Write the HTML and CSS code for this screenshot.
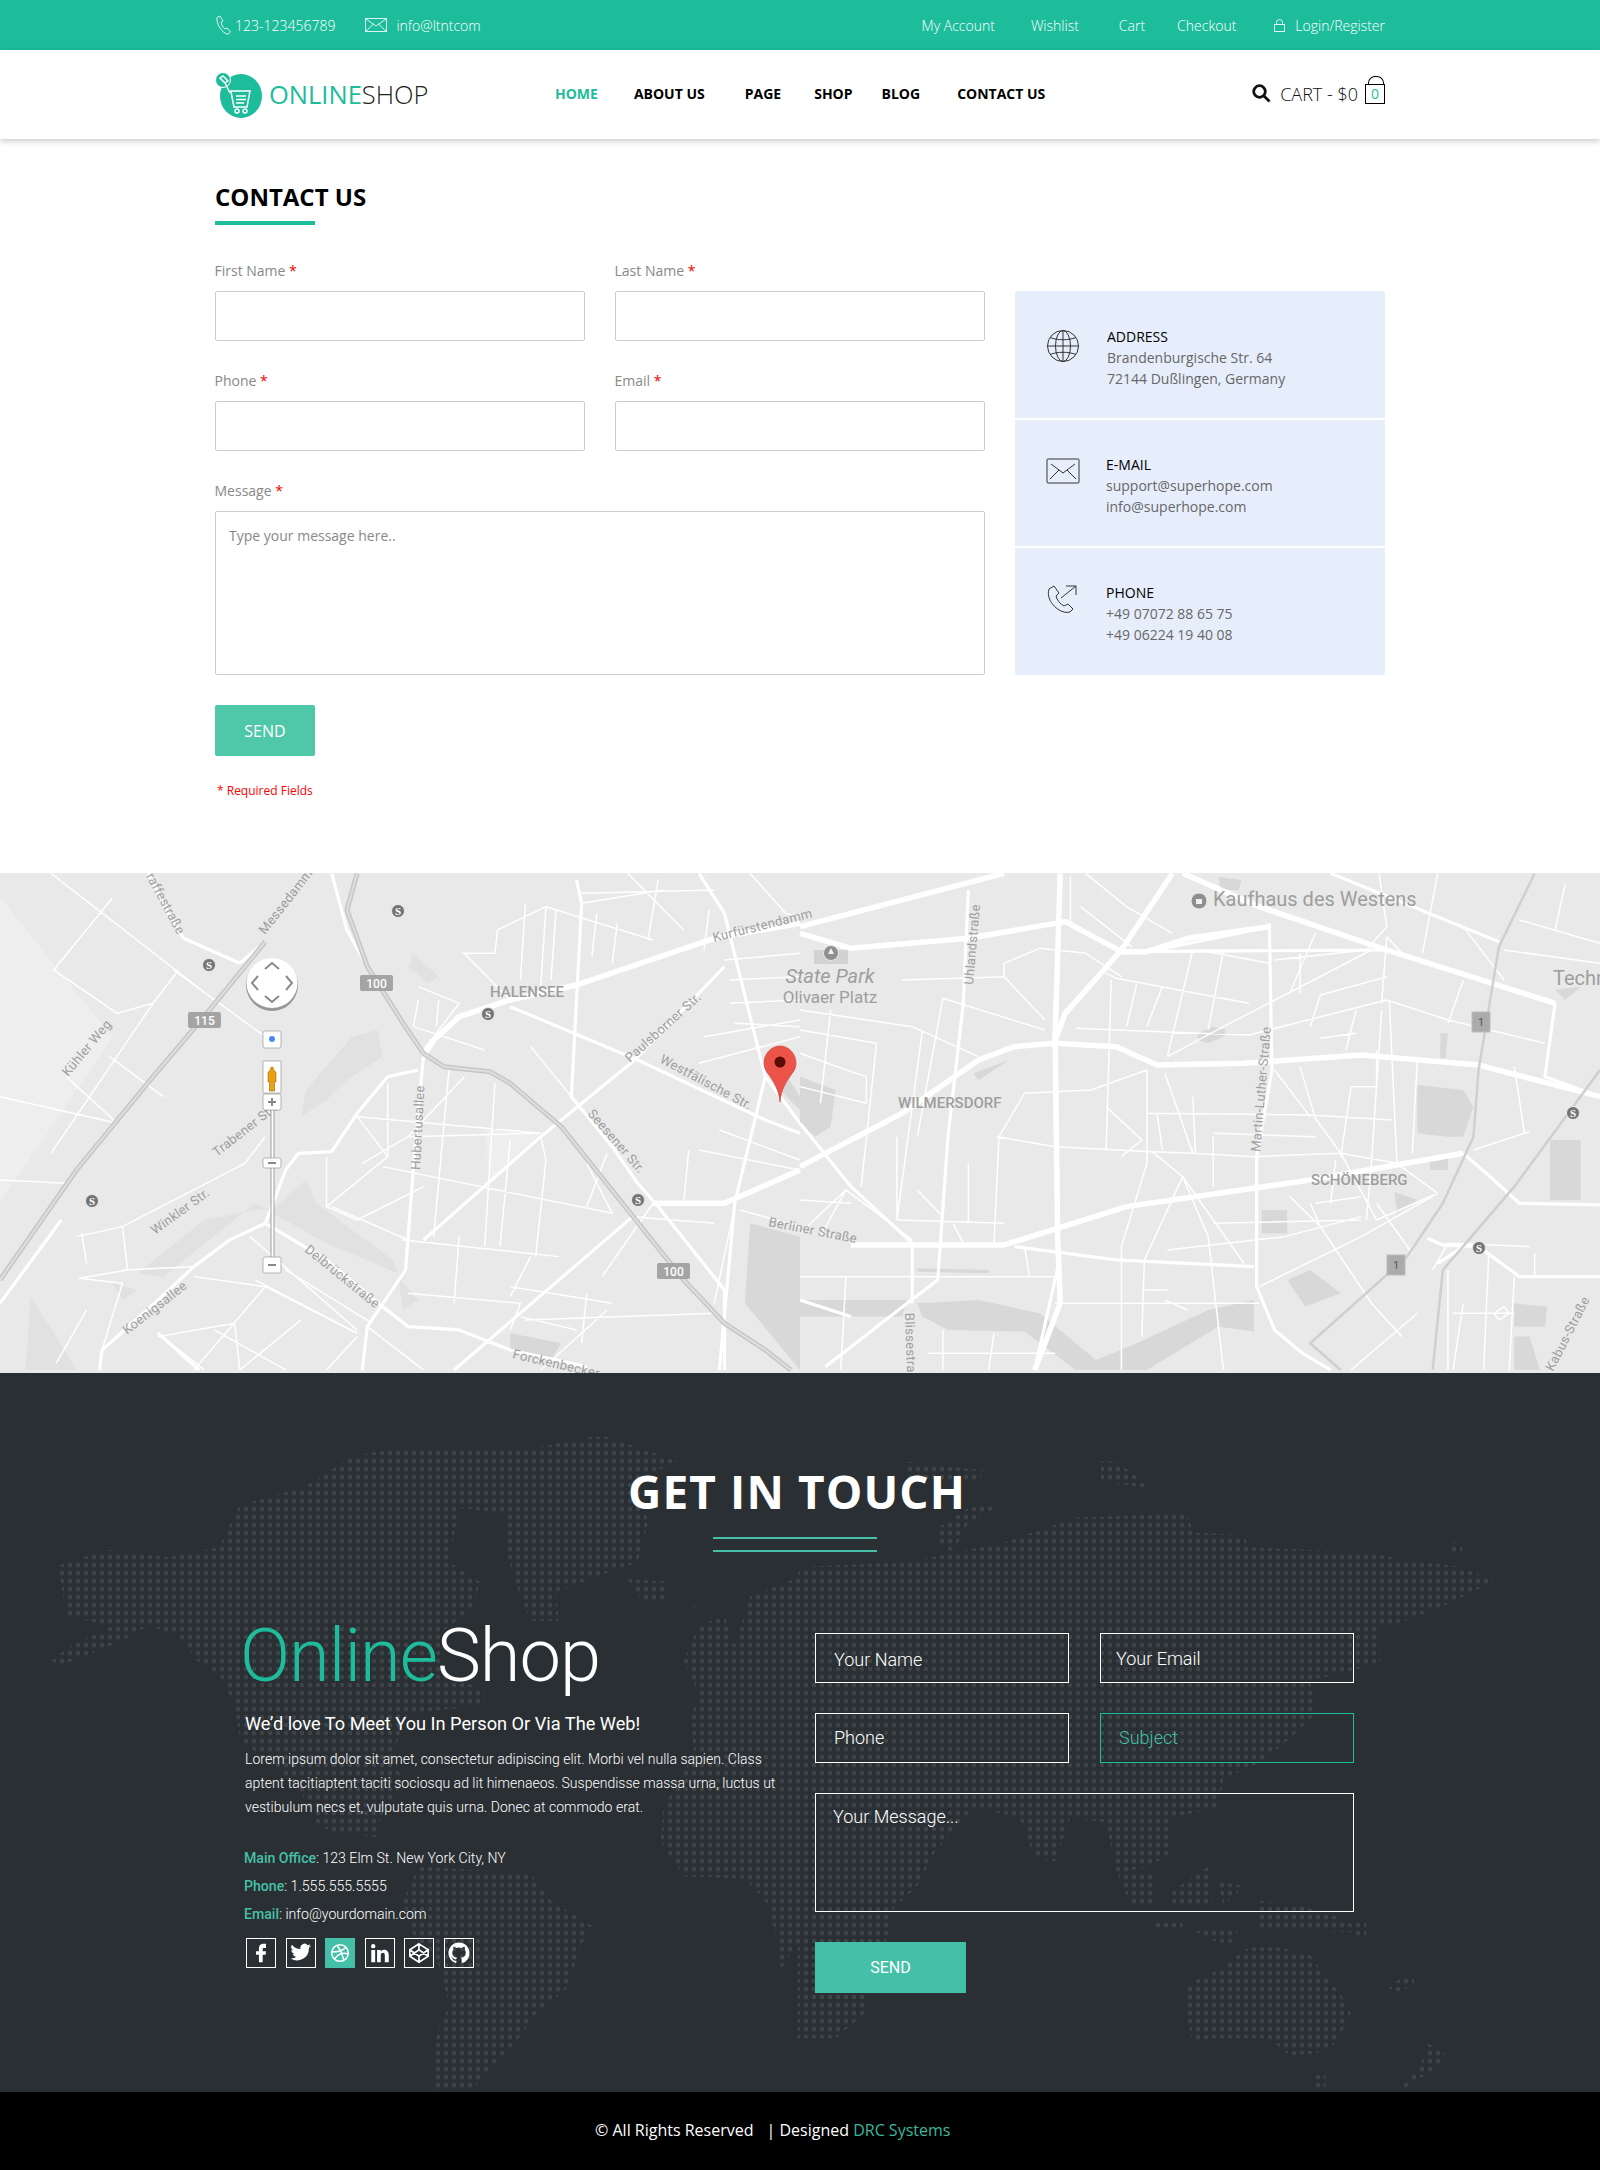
FILE: index.html
```html
<!DOCTYPE html>
<html lang="en">
<head>
<meta charset="utf-8">
<title>Contact Us - OnlineShop</title>
<link rel="stylesheet" href="styles.css">
</head>
<body>
<header class="topbar">
  <div class="wrap topbar-in">
    <div class="top-left">
      <svg class="ic-phone" width="18" height="20" viewBox="0 0 18 20"><path d="M2 2.500 5 1l3 5-2 1.500c.5 2.500 2 5 4 6.500l2-1 3.500 4-2.500 2.300C8 18.500 1 10 2 2.500z"/></svg>
      <span class="top-phone">123-123456789</span>
      <svg class="ic-mail" width="22" height="14" viewBox="0 0 22 14"><rect x=".5" y=".5" width="21" height="13"/><path d="M1 1l10 7 10-7M1 13l7.500-7M21 13l-7.500-7"/></svg>
      <span class="top-mail">info@ltntcom</span>
    </div>
    <nav class="top-right">
      <a>My Account</a><a>Wishlist</a><a>Cart</a><a>Checkout</a>
      <svg class="ic-lock" width="11" height="13" viewBox="0 0 11 13"><rect x=".5" y="5.500" width="10" height="7"/><path d="M2.500 5.500V3.500a3 3 0 0 1 6 0v2"/></svg>
      <a class="login">Login/Register</a>
    </nav>
  </div>
</header>

<div class="mainnav">
  <div class="wrap mainnav-in">
    <div class="logo">
      <svg width="50" height="46" viewBox="0 0 50 46">
        <ellipse class="lg-a" cx="27" cy="24" rx="21" ry="22"/>
        <circle class="lg-a lg-w" cx="9" cy="8" r="7.500"/>
        <path class="lg-b" d="M9 4l5 5-3 2-5-5zM11 11l5 10"/>
        <path class="lg-b" d="M16 19h20l-3 16H20L17 20"/>
        <path class="lg-b" d="M22 24h10M22 27.500h10M22 31h8"/>
        <circle class="lg-b" cx="23" cy="39" r="2"/><circle class="lg-b" cx="31" cy="39" r="2"/>
      </svg>
      <span class="logo-text"><b>ONLINE</b>SHOP</span>
    </div>
    <nav class="menu">
      <a class="active">HOME</a><a>ABOUT US</a><a>PAGE</a><a>SHOP</a><a>BLOG</a><a>CONTACT US</a>
    </nav>
    <div class="cart">
      <svg class="ic-search" width="19" height="19" viewBox="0 0 19 19"><circle cx="7.500" cy="7.500" r="5.800"/><path d="M11.800 11.800 17.500 17.500"/></svg>
      <span class="cart-text">CART - $0</span>
      <span class="bag"><span class="bag-n">0</span></span>
    </div>
  </div>
</div>

<main class="contact wrap">
  <h1 class="page-title">CONTACT US</h1>
  <div class="title-rule"></div>
  <div class="contact-row">
    <form class="cform">
      <label class="fld"><span class="lbl">First Name <i>*</i></span><input class="inp" type="text"></label>
      <label class="fld"><span class="lbl">Last Name <i>*</i></span><input class="inp" type="text"></label>
      <label class="fld"><span class="lbl">Phone <i>*</i></span><input class="inp" type="text"></label>
      <label class="fld"><span class="lbl">Email <i>*</i></span><input class="inp" type="text"></label>
      <label class="fld fld-wide"><span class="lbl">Message <i>*</i></span><textarea class="inp ta" placeholder="Type your message here.."></textarea></label>
      <div class="fld-wide">
        <button class="send" type="button">SEND</button>
        <p class="req">* Required Fields</p>
      </div>
    </form>
    <aside class="info">
      <section class="info-card">
        <svg class="info-ic" width="34" height="34" viewBox="0 0 34 34"><circle cx="17" cy="17" r="15.500"/><ellipse cx="17" cy="17" rx="7.500" ry="15.500"/><path d="M17 1.500v31M1.500 17h31M4 8.500c8 3 18 3 26 0M4 25.500c8-3 18-3 26 0"/></svg>
        <div class="info-txt"><h3>ADDRESS</h3><p>Brandenburgische Str. 64</p><p>72144 Dußlingen, Germany</p></div>
      </section>
      <section class="info-card">
        <svg class="info-ic" width="34" height="26" viewBox="0 0 34 26"><rect x="1" y="1" width="32" height="24" rx="1"/><path d="M5 6l12 9 12-9M4 21l9-9M30 21l-9-9"/></svg>
        <div class="info-txt"><h3>E-MAIL</h3><p>support@superhope.com</p><p>info@superhope.com</p></div>
      </section>
      <section class="info-card">
        <svg class="info-ic" width="34" height="30" viewBox="0 0 34 30"><path d="M3 5l5-3 5 7-3 3c1 4 4 8 8 10l4-2 5 5-3 3C14 31-1 17 3 5zM15 14 30 2M20 2h10v9"/></svg>
        <div class="info-txt"><h3>PHONE</h3><p>+49 07072 88 65 75</p><p>+49 06224 19 40 08</p></div>
      </section>
    </aside>
  </div>
</main>

<section class="map">
  <svg class="map-svg" width="1600" height="500" viewBox="0 873 1600 500">
    <rect x="0" y="873" width="1600" height="500" class="m-bg"/>
    <g class="m-soft" transform="translate(0,870) scale(.5102,.3333)">
      <path class="m-light" d="M0 80 220 500 0 1000zM950 780 1060 790 960 930z"/>
      <path class="m-block-l" d="M200 100 230 160 210 130zM690 500 740 480 750 560 680 630 640 690 590 740 600 660zM810 250 860 320 840 340 800 290zM540 1010 600 930 620 1000 770 1170 780 1210 640 1120 500 1000 320 1220 270 1210 400 1050zM60 1280 110 1400 150 1500 50 1500zM220 1240 270 1260 240 1290zM780 1220 820 1290 790 1320z"/>
      <path class="m-block" d="M1000 1390 1100 1420 1080 1470 1000 1440zM1470 1060 1568 1100 1568 1500 1460 1300zM1535 600 1568 680 1568 720 1535 670z"/>
      <path class="m-thin" d="M100 10 420 390M0 680 230 760M220 85 105 300 230 430 300 400 350 300M300 400 100 850M340 300 520 500M215 560 320 680M130 620 230 760M0 930 130 940M150 1100 240 1070 480 880 520 800M240 1070 250 1200 155 1225 240 1240 200 1440M160 1090 170 1180M240 1200 380 1190M380 1220 520 1250 700 1390M520 1250 380 1500M490 1100 700 1380M650 1010 800 1110M640 860 640 1010 700 1050 830 950M710 880 800 800 1050 790M700 740 760 860 640 1010M760 640 760 860M700 740 1060 790M880 600 850 1100M970 640 950 1130M1060 800 1070 870 1050 1160M790 1110 1095 1160M750 890 1200 1030 1150 880M910 620 800 800M910 250 1000 390M905 250 970 250 975 180 1070 110 1280 210M1030 100 1020 330M1070 110 1060 350M1170 130 1160 260M1210 160 1200 280M1040 530 1120 680M820 350 900 400 830 540M820 390 810 470 950 540M860 390 855 470M1140 100 1300 60M1140 70 1400 60M1470 10 1540 130 1568 140M1420 270 1568 250M1430 330 1568 320M1380 500 1568 450M1370 580 1568 500M1410 780 1568 870M1370 840 1568 900M1350 840 1340 1000M1280 1000 1180 1220M1450 1020 1568 1070M1440 1010 1400 1300M800 1270 1020 1300 1000 1380M1030 1350 1400 1330M1150 1270 1140 1420M1020 1340 1130 1380M720 1370 830 1500M700 1400 640 1500M310 1400 460 1360 470 1500M310 1390 400 1500M170 1320 110 1480M500 1230 700 1390M560 1200 730 1360M420 1380 560 1500M590 1350 470 1500M1000 1250 1200 1300M1060 1500 1190 1320M1090 120 1080 330M1040 1160 1000 1280M900 1100 890 1300M1190 850 1150 1010M1000 810 980 1130M1240 1040 1400 1060M1430 400 1568 390M1440 460 1568 470M1290 30 1270 210M1230 10 1340 180M1390 120 1380 240"/>
      <path class="m-mid" d="M650 10 680 180 720 290 780 440 820 530M470 280 360 205 330 130 290 10M120 1050 0 1300M820 600 760 620 700 730 650 845 585 850 560 900 520 1060 450 1110 380 1190 310 1290 200 1440 195 1500M520 1060 640 1170 750 1310 800 1370 900 1380 1000 1440 1150 1490M830 560 815 800 800 1100 795 1200 720 1370 710 1500M1000 410 1250 570 1500 750 1568 790M310 1390 390 1500M1130 30 1140 100 1120 680 1200 830 1250 940 1290 1010 1420 1260 1420 1500M1370 10 1420 130 1480 500 1500 620 1568 760M1500 620 1440 1000 1410 1500M890 1500 1240 1040M830 1110 1060 800 1240 575 1420 290M470 280 520 215"/>
      <path class="m-thick" d="M830 560 850 510 900 440 1000 390 1130 345 1400 205 1568 160M1280 1000 1420 1000 1568 900"/>
      <path class="m-hw" d="M700 10 680 120 720 290 790 460 830 550 870 590 960 605 1000 640 1100 770 1220 1000 1340 1230 1420 1360 1500 1440 1550 1500M520 215 400 440 300 620 150 900 0 1230"/>
      <path class="m-hwi" d="M700 10 680 120 720 290 790 460 830 550 870 590 960 605 1000 640 1100 770 1220 1000 1340 1230 1420 1360 1500 1440 1550 1500M520 215 400 440 300 620 150 900 0 1230"/>
    </g>
    <g class="m-soft" transform="translate(800,870) scale(.5102,.3333)">
      <path class="m-block" d="M230 1300 350 1290 470 1330 580 1470 660 1420 800 1320 890 1290 890 1385 820 1370 680 1500 540 1500 440 1385 290 1380 240 1340zM0 1290 210 1290 200 1340 0 1340zM0 620 70 660 60 770 30 800 0 760zM1210 645 1300 660 1320 710 1300 800 1270 800 1210 790zM905 1020 955 1020 955 1090 905 1090zM780 490 810 470 835 480 830 500 800 520 780 510zM1165 965 1210 990 1170 1030zM955 1230 1000 1200 1060 1270 990 1310zM1235 870 1270 865 1270 900 1235 900zM1470 810 1530 810 1530 990 1470 990zM1400 1300 1465 1310 1460 1370 1400 1370zM1400 1400 1430 1400 1450 1500 1400 1500zM820 20 865 30 860 60 825 60zM1480 360 1530 350 1500 390zM1255 490 1270 490 1265 565 1255 565zM340 610 410 570 350 630zM230 1195 370 1200 370 1210 230 1205z"/>
      <path class="m-thin" d="M0 420 220 470 350 560M0 480 150 520M0 550 100 605 130 620 130 700M530 20 530 160M560 10 640 110 730 190M550 110 650 230M780 240 920 280M930 270 1110 240M1020 375 1150 320M1020 505 1090 490M1020 440 1150 390 1270 450 1460 520M880 400 620 325 600 310M610 330 600 840M660 340 640 470M710 350 680 470M770 240 720 560M830 240 800 480M540 475 780 490 880 495 1150 390M720 560 830 470 1120 240M280 385 480 480M280 385 230 800M200 330 400 320 480 450M400 320 400 280 470 235 560 250 630 320M680 600 680 880 630 1130M680 600 570 660 440 670 390 800 380 1130M385 800 500 830 690 845 770 850 890 860 1060 850 1170 880M715 610 770 850M600 710 670 810 630 860M680 730 1000 735 1160 750M810 800 810 950M810 790 1010 800M700 730 710 840M690 845 750 920 870 1180M750 920 675 1170 670 1400M750 920 800 1100 830 1500M770 680 775 850M980 590 1010 745 1060 850 1170 880M930 600 1000 740M1010 745 1060 850 1130 1050 1250 970M1080 650 1060 860M1140 420 1120 880M1155 390 1170 880 1250 970M1210 570 1200 850M1400 590 1420 790 1320 840M1320 840 1430 785M1090 420 1070 540M1270 460 1300 330M1380 330 1300 170M1410 150 1568 220M1500 40 1480 180M1250 10 1220 250M1110 240 1150 170 1135 10M1150 200 1180 250M500 1300 900 1300M630 1130 630 1500M715 1290 760 1320M900 1250 1100 1100 1250 970M1000 1000 1020 1070 1120 1300 1180 1400M1130 1000 1200 1150M0 990 100 1000M0 1220 500 1220M0 1090 90 960 220 1110M90 960 40 1100M190 1050 400 1060M190 1050 190 800M330 880 330 1060M230 960 280 1040M810 1060 1100 1050M720 1140 950 1100M300 1060 320 1120M90 1220 80 1500M280 1380 280 1500M380 1390 370 1500M250 1450 500 1450M1300 1300 1280 1500M1350 1150 1340 1500M1400 1220 1390 1500M1440 1150 1440 1220M1270 1200 1270 1500M1280 1330 1400 1330M1360 1330 1380 1310 1390 1330 1370 1350zM1210 1330 1080 1500M1240 1200 1270 1120 1330 1130M1280 1120 1430 1130M0 650 130 700M150 520 120 950M60 420 40 700M240 480 190 1050M440 1130 450 1220M1020 375 1000 470M980 250 980 370M1010 190 960 370M1150 200 1140 400M1050 870 1040 1000M960 980 1020 1070M1010 1000 1100 980M950 1100 1100 1040M1080 650 1130 650M1130 540 1130 650M1120 880 1110 1050M1380 240 1568 280M670 1260 720 1260M630 1300 800 1300"/>
      <path class="m-mid" d="M330 60 320 400 290 800 270 1230 210 1300 50 1490M920 160 925 600 895 860 895 1250 930 1380 985 1450 1040 1500M0 760 100 950 220 1120 220 1300M420 1130 620 1170 890 1190M1230 1105 1260 1125 1330 1130 1410 1220 1568 1220M1300 850 1360 930 1410 1000 1568 1005M1040 10 1370 215M1480 400 1460 620 1568 680M640 245 1150 240M920 170 700 240M510 1160 460 1500M0 1290 100 1340M1300 1130 1250 1180"/>
      <path class="m-thick" d="M0 170 400 10M0 190 100 235 330 205 520 155 630 245 680 245 760 205 920 170M510 10 500 500 505 1100 510 1300 460 1500M730 10 630 240 520 430 500 510M750 10 900 110 1150 240 1480 400M0 890 200 730 350 570 420 530 500 520 620 530 700 585 870 580 1100 555 1330 585 1568 680M100 1125 400 1125 640 1010 1000 930 1300 850"/>
      <path class="m-hw m-hw-n" d="M1440 10 1370 230 1330 600 1320 800 1260 1000 1190 1160 1000 1420 1060 1500M1568 600 1400 950 1260 1200 1240 1500"/>
    </g>
    <g class="m-lbl">
      <text class="l-19" x="1213" y="906">Kaufhaus des Westens</text>
      <text class="l-20i" x="830" y="983">State Park</text>
      <text class="l-17" x="830" y="1003">Olivaer Platz</text>
      <text class="l-15" x="490" y="997">HALENSEE</text>
      <text class="l-15" x="898" y="1108">WILMERSDORF</text>
      <text class="l-15" x="1311" y="1185">SCHÖNEBERG</text>
      <text class="l-20" x="1553" y="985">Techn</text>
      <text class="l-13" transform="translate(714,942) rotate(-14)">Kurfürstendamm</text>
      <text class="l-13" transform="translate(630,1063) rotate(-42)">Paulsborner Str.</text>
      <text class="l-13" transform="translate(659,1062) rotate(28)">Westfälische Str.</text>
      <text class="l-13" transform="translate(587,1114) rotate(49)">Seesener Str.</text>
      <text class="l-13" transform="translate(420,1170) rotate(-87)">Hubertusallee</text>
      <text class="l-13" transform="translate(217,1157) rotate(-38)">Trabener Str.</text>
      <text class="l-13" transform="translate(155,1235) rotate(-36)">Winkler Str.</text>
      <text class="l-13" transform="translate(68,1077) rotate(-50)">Kühler Weg</text>
      <text class="l-13" transform="translate(127,1335) rotate(-38)">Koenigsallee</text>
      <text class="l-13" transform="translate(304,1251) rotate(39)">Delbrückstraße</text>
      <text class="l-13" transform="translate(512,1358) rotate(13)">Forckenbecker</text>
      <text class="l-13" transform="translate(146,876) rotate(62)">raffestraße</text>
      <text class="l-13" transform="translate(265,935) rotate(-52)">Messedamm</text>
      <text class="l-13" transform="translate(768,1226) rotate(11)">Berliner Straße</text>
      <text class="l-13" transform="translate(973,985) rotate(-85)">Uhlandstraße</text>
      <text class="l-13" transform="translate(1260,1152) rotate(-85)">Martin-Luther-Straße</text>
      <text class="l-13" transform="translate(905,1313) rotate(88)">Blissestra</text>
      <text class="l-13" transform="translate(1553,1372) rotate(-63)">Kabus-Straße</text>
    </g>
    <g class="m-shield">
      <rect x="360" y="975" width="33" height="16" rx="2"/><text x="376.500" y="988">100</text>
      <rect x="657" y="1263" width="33" height="16" rx="2"/><text x="673.500" y="1276">100</text>
      <rect x="188" y="1012" width="33" height="16" rx="2"/><text x="204.500" y="1025">115</text>
    </g>
    <g class="m-one">
      <rect x="1472" y="1012" width="18" height="20"/><text x="1481" y="1026">1</text>
      <rect x="1387" y="1255" width="18" height="20"/><text x="1396" y="1269">1</text>
    </g>
    <g class="m-s">
      <circle cx="398" cy="911" r="6.500"/><text x="398" y="915">S</text>
      <circle cx="209" cy="965" r="6.500"/><text x="209" y="969">S</text>
      <circle cx="488" cy="1014" r="6.500"/><text x="488" y="1018">S</text>
      <circle cx="92" cy="1201" r="6.500"/><text x="92" y="1205">S</text>
      <circle cx="638" cy="1200" r="6.500"/><text x="638" y="1204">S</text>
      <circle cx="1573" cy="1113" r="6.500"/><text x="1573" y="1117">S</text>
      <circle cx="1479" cy="1248" r="6.500"/><text x="1479" y="1252">S</text>
    </g>
    <rect x="814" y="950" width="34" height="14" class="m-dk"/>
    <circle cx="831" cy="953" r="7.500" class="m-poi"/><path d="M831 948l3 6h-6z" class="m-poi-w"/>
    <circle cx="1199" cy="901" r="8" class="m-poi"/><rect x="1196" y="899" width="6" height="5" class="m-poi-w"/>
    <path class="pin" d="M780 1102c-1-12-6-20-11-27-3-4-5-7-5-12 0-9 7-17 16-17s16 8 16 17c0 5-2 8-5 12-5 7-10 15-11 27z"/>
    <circle cx="780" cy="1062" r="5.500" class="pin-dot"/>
    <ellipse cx="272" cy="985" rx="26" ry="26" class="ctl-shadow"/>
    <ellipse cx="272" cy="983" rx="25.500" ry="25" class="ctl"/>
    <path class="chev" d="M265 969l7-6 7 6M265 996l7 6 7-6M258 976l-6 7 6 7M286 976l6 7-6 7"/>
    <rect x="263" y="1031" width="18" height="17" rx="2" class="ctl ctl-s"/>
    <circle cx="272" cy="1039" r="3" class="ctl-blue"/>
    <rect x="271" y="1105" width="3" height="160" class="ctl-rail"/>
    <rect x="263" y="1061" width="18" height="32" rx="1" class="ctl ctl-s"/>
    <path class="peg" d="M270 1071c0-2 .5-4 2-4s2 2 2 4l2 1v10h-1.500v9h-5v-9H268v-10z"/>
    <rect x="263" y="1094" width="18" height="16" rx="2" class="ctl ctl-s"/>
    <path class="chev" d="M268 1102h8M272 1098v8"/>
    <rect x="263" y="1158" width="18" height="10" rx="2" class="ctl ctl-s"/>
    <path class="chev" d="M268 1163h8"/>
    <rect x="263" y="1257" width="18" height="16" rx="2" class="ctl ctl-s"/>
    <path class="chev" d="M268 1265h8"/>
  </svg>
</section>

<section class="touch">
  <svg class="dots" width="1600" height="719" viewBox="0 1373 1600 719">
    <defs>
      <pattern id="dot" x="0" y="0" width="8" height="8" patternUnits="userSpaceOnUse"><circle cx="6" cy="5" r="2.200" fill="#3e4347"/></pattern>
      <clipPath id="world">
        <path transform="translate(0,1400) scale(.5102,.4911)" d="M120 335 210 305 330 320 430 300 450 255 470 215 600 175 690 115 790 95 1060 95 1160 75 1190 75 1330 125 1250 160 1270 250 1250 330 1170 360 1090 390 1095 450 1040 450 1010 370 990 300 990 230 900 220 880 330 940 370 930 420 870 470 870 560 950 590 950 620 800 640 770 720 790 780 750 840 740 890 650 880 620 860 590 800 540 750 470 690 460 620 430 560 385 530 350 480 290 460 240 490 170 520 120 540 100 530 140 500 220 460 130 440 115 340zM820 950 1040 965 1080 1020 1160 1070 1140 1110 1110 1200 1050 1250 1010 1310 970 1350 930 1400 850 1408 855 1300 880 1230 860 1150 810 1090 790 1020zM1230 365 1310 370 1310 405 1260 410zM1355 420 1365 420 1365 430 1355 430zM1340 530 1370 460 1420 440 1440 500 1470 400 1568 360 1568 1100 1530 1160 1525 1100 1500 1020 1460 975 1340 970 1295 900 1300 830 1360 720 1355 640 1370 600z"/>
        <path transform="translate(800,1400) scale(.5102,.4911)" d="M-5 360 0 340 210 330 400 290 540 240 760 230 770 270 870 275 880 300 1110 310 1180 325 1300 340 1360 370 1260 420 1170 455 1130 460 1140 530 1090 550 1000 570 1010 640 960 690 900 740 830 770 820 830 730 850 720 930 680 950 640 960 620 960 600 860 530 850 500 940 460 930 430 850 340 830 265 920 230 990 180 1040 170 1100 140 1170 125 1250 70 1300 -5 1300zM210 125 370 145 340 165 210 160zM590 125 620 125 690 180 590 165zM270 260 330 220 400 210 330 250 300 310 270 295zM620 960 700 960 690 1030 650 1030zM730 1000 800 950 810 1030 730 1030zM820 980 870 990 830 1030zM900 1020 980 1030 1060 1055 1110 1085 900 1075zM690 1065 750 1065 750 1075 690 1075zM770 1080 860 1075 850 1105 820 1105zM1090 1060 1110 1060 1110 1090 1090 1090zM880 1115 940 1115 1000 1130 1020 1160 1060 1210 1080 1250 1060 1290 1050 1310 1010 1330 960 1335 920 1300 800 1300 770 1310 755 1240 760 1190 820 1160zM1150 1195 1200 1165 1205 1190 1170 1205zM1230 1310 1265 1330 1260 1350 1210 1385 1180 1405 1180 1390 1215 1360zM1005 1375 1030 1375 1030 1400 1005 1400zM1270 290 1298 290 1298 310 1270 310z"/>
      </clipPath>
    </defs>
    <rect x="0" y="1373" width="1600" height="719" fill="url(#dot)" clip-path="url(#world)"/>
  </svg>
  <div class="touch-in">
    <h2 class="touch-title">GET IN TOUCH</h2>
    <div class="touch-rule"></div>
    <div class="touch-body">
      <div class="touch-left">
        <div class="brand"><span>Online</span>Shop</div>
        <h4 class="tagline">We’d love To Meet You In Person Or Via The Web!</h4>
        <p class="lorem">Lorem ipsum dolor sit amet, consectetur adipiscing elit. Morbi vel nulla sapien. Class aptent tacitiaptent taciti sociosqu ad lit himenaeos. Suspendisse massa urna, luctus ut vestibulum necs et, vulputate quis urna. Donec at commodo erat.</p>
        <ul class="addr">
          <li><b>Main Office</b>: 123 Elm St. New York City, NY</li>
          <li><b>Phone</b>: 1.555.555.5555</li>
          <li><b>Email</b>: info@yourdomain.com</li>
        </ul>
        <div class="social">
          <a class="soc"><svg width="20" height="20" viewBox="0 0 24 24"><path class="s-f" d="M18 1h-3.500a5 5 0 0 0-5 5v4H6v4h3.500v9H14v-9h3.500l.5-4h-4V7a1 1 0 0 1 1-1h3z"/></svg></a>
          <a class="soc"><svg width="22" height="22" viewBox="0 0 24 24"><path class="s-f" d="M23 4a9 9 0 0 1-2.800 1 4.500 4.500 0 0 0 2-2.600 9 9 0 0 1-2.900 1.100 4.500 4.500 0 0 0-7.800 4.100A13 13 0 0 1 2 2.900a4.500 4.500 0 0 0 1.400 6.100 4.500 4.500 0 0 1-2-.6c0 2.200 1.500 4.100 3.600 4.500a4.500 4.500 0 0 1-2 .1 4.500 4.500 0 0 0 4.200 3.100A9 9 0 0 1 .6 18a13 13 0 0 0 20-11.600A9 9 0 0 0 23 4z"/></svg></a>
          <a class="soc soc-on"><svg width="20" height="20" viewBox="0 0 24 24"><circle class="s-s" cx="12" cy="12" r="10"/><path class="s-s" d="M8.560 2.750c4.370 6.030 6.020 9.420 8.030 17.720m2.540-15.380c-3.720 4.350-8.940 5.660-16.880 5.850m19.500 1.900c-3.500-.93-6.630-.82-8.940 0-2.580.92-5.010 2.860-7.440 6.320"/></svg></a>
          <a class="soc"><svg width="20" height="20" viewBox="0 0 24 24"><path class="s-f" d="M16.500 8c3.600 0 6 2.300 6 6.300V23h-4.700v-8.200c0-1.900-.8-3-2.400-3s-2.500 1.100-2.500 3V23H8.500V8.500h4.400v2c.8-1.500 2-2.500 3.600-2.500zM1.500 8.500h4.700V23H1.500z"/><circle class="s-f" cx="3.850" cy="3.800" r="2.600"/></svg></a>
          <a class="soc"><svg width="22" height="22" viewBox="0 0 24 24"><path class="s-s" d="M12 2 22 8.500v7L12 22 2 15.500v-7zM12 22v-6.500M22 8.500l-10 7-10-7M2 15.500l10-7 10 7M12 2v6.500"/></svg></a>
          <a class="soc"><svg width="22" height="22" viewBox="0 0 24 24"><path class="s-f" d="M12 .5C5.650.5.500 5.650.500 12c0 5.090 3.290 9.400 7.860 10.930.57.1.78-.25.78-.55v-2.130c-3.200.7-3.870-1.360-3.870-1.360-.52-1.330-1.280-1.680-1.280-1.680-1.040-.71.08-.7.08-.7 1.160.08 1.770 1.190 1.770 1.190 1.030 1.760 2.700 1.250 3.350.96.1-.74.4-1.250.73-1.540-2.550-.29-5.240-1.280-5.240-5.690 0-1.260.45-2.290 1.180-3.090-.12-.29-.51-1.460.11-3.050 0 0 .97-.31 3.170 1.180a11 11 0 0 1 5.770 0c2.200-1.490 3.170-1.180 3.170-1.180.62 1.590.24 2.760.12 3.050.74.8 1.180 1.830 1.180 3.090 0 4.420-2.690 5.390-5.250 5.680.41.36.78 1.060.78 2.140v3.170c0 .31.21.66.79.55A11.500 11.500 0 0 0 23.500 12C23.500 5.650 18.350.5 12 .5z"/></svg></a>
        </div>
      </div>
      <form class="tform">
        <input class="ti ti-name" type="text" placeholder="Your Name">
        <input class="ti ti-b" type="text" placeholder="Your Email">
        <input class="ti ti-a" type="text" placeholder="Phone">
        <input class="ti ti-c" type="text" placeholder="Subject">
        <textarea class="ti tta" placeholder="Your Message..."></textarea>
        <button class="tsend" type="button">SEND</button>
      </form>
    </div>
  </div>
</section>

<footer class="copy">
  <span>© All Rights Reserved</span><span class="copy-2">| Designed <a>DRC Systems</a></span>
</footer>
</body>
</html>
```
FILE: styles.css
```css
* { box-sizing: border-box; }
html, body { margin: 0; padding: 0; }
body { font-family: "Open Sans", "Liberation Sans", sans-serif; color: #000; background: #fff; width: 1600px; }
.wrap { width: 1170px; margin: 0 auto; }
a { color: inherit; text-decoration: none; }

/* top bar */
.topbar { background: #1dbd9b; height: 50px; color: #fff; font-size: 14px; font-weight: 300; }
.topbar-in { display: flex; justify-content: space-between; align-items: center; height: 50px; }
.top-left, .top-right { display: flex; align-items: center; }
.ic-phone path, .ic-mail *, .ic-lock * { fill: none; stroke: #fff; stroke-width: 1; opacity: .85; }
.top-phone { margin-left: 2px; }
.ic-mail { margin-left: 30px; }
.top-mail { margin-left: 9px; }
.top-right a:nth-child(2) { margin-left: 36px; }
.top-right a:nth-child(3) { margin-left: 40px; }
.top-right a:nth-child(4) { margin-left: 32px; }
.ic-lock { margin-left: 38px; }
.login { margin-left: 10px; }

/* main nav */
.mainnav { height: 89px; background: #fff; box-shadow: 0 2px 6px rgba(0,0,0,.22); position: relative; }
.mainnav-in { display: flex; align-items: center; height: 89px; }
.logo { display: flex; align-items: center; width: 340px; }
.logo svg { margin-left: -1px; }
.lg-a { fill: #1dbd9b; }
.lg-w { stroke: #fff; stroke-width: 1; }
.lg-b { fill: none; stroke: #fff; stroke-width: 1.500; }
.logo-text { font-size: 25.500px; font-weight: 300; color: #222; margin: -2px 0 0 5px; }
.logo-text b { font-weight: 400; color: #1dbd9b; }
.menu { display: flex; font-size: 14px; font-weight: 700; color: #000; margin-top: -2px; }
.menu .active { color: #1dbd9b; }
.menu a:nth-child(2) { margin-left: 36px; }
.menu a:nth-child(3) { margin-left: 40px; }
.menu a:nth-child(4) { margin-left: 33px; }
.menu a:nth-child(5) { margin-left: 29px; }
.menu a:nth-child(6) { margin-left: 37px; }
.cart { display: flex; align-items: center; margin-left: auto; margin-top: -2px; }
.ic-search { margin-right: 1px; }
.ic-search circle, .ic-search path { fill: none; stroke: #111; stroke-width: 2.800; }
.cart-text { font-size: 18px; font-weight: 300; margin-left: 8px; color: #111; }
.bag { display: block; position: relative; width: 20px; height: 20px; border: 1px solid #000; margin-left: 7px; text-align: center; }
.bag::before { content: ""; position: absolute; left: 2px; top: -9px; width: 14px; height: 8px; border: 1px solid #000; border-bottom: 0; border-radius: 7px 7px 0 0; }
.bag-n { display: block; font-size: 14px; line-height: 18px; color: #1dbd9b; }

/* contact */
.contact { height: 734px; }
.page-title { margin: 0; padding-top: 41px; font-size: 24px; line-height: 34px; font-weight: 700; color: #000; }
.title-rule { width: 100px; height: 4px; background: #1dbd9b; margin-top: 7px; }
.contact-row { display: flex; gap: 30px; margin-top: 36px; }
.cform { display: grid; grid-template-columns: 370px 370px; column-gap: 30px; row-gap: 30px; width: 770px; align-content: start; }
.fld { display: block; }
.fld-wide { grid-column: 1 / 3; }
.lbl { display: block; font-size: 14px; line-height: 20px; color: #888; margin: 0 0 10px -.5px; }
.lbl i { font-style: normal; color: #e00; }
.inp { display: block; width: 100%; height: 50px; border: 1px solid #ccc; border-radius: 2px; background: #fff; font: 14px "Open Sans", sans-serif; padding: 0 13px; outline: 0; }
.ta { height: 164px; padding-top: 14px; resize: none; }
.ta::placeholder { color: #888; opacity: 1; }
.send { display: block; width: 100px; height: 51px; background: #4fc7a9; color: #fff; border: 0; border-radius: 2px; font: 400 16px "Open Sans", sans-serif; }
.req { margin: 25px 0 0 2px; font-size: 12px; line-height: 20px; color: #f00; }
.info { width: 370px; margin-top: 30px; display: flex; flex-direction: column; gap: 2px; }
.info-card { height: 126px; background: #e6eefc; display: flex; padding: 36px 0 0 31px; }
.info-card:first-child { height: 127px; border-radius: 3px 3px 0 0; }
.info-card:last-child { height: 127px; border-radius: 0 0 3px 3px; }
.info-ic { flex: none; width: 34px; margin-top: 2px; }
.info-ic * { fill: none; stroke: #333; stroke-width: 1; }
.info-card:last-child .info-ic { margin-top: 0; }
.info-txt { margin-left: 26px; margin-top: -2px; }
.info-card:first-child .info-txt { margin-left: 27px; margin-top: -1px; }
.info-txt h3 { margin: 0; font-size: 14px; line-height: 21px; font-weight: 400; color: #000; }
.info-txt p { margin: 0; font-size: 14px; line-height: 21px; color: #666; }

/* map */
.map { height: 500px; overflow: hidden; }
.map-svg { display: block; }
.m-bg { fill: #e9e9e9; }
.m-soft { filter: blur(.35px); }
.m-light { fill: #eeeeee; stroke: none; }
.m-block { fill: #d8d8d8; stroke: none; }
.m-block-l { fill: #e1e1e1; stroke: none; }
.m-thin, .m-mid, .m-thick, .m-hw, .m-hwi { fill: none; vector-effect: non-scaling-stroke; stroke-linejoin: round; }
.m-thin { stroke: #fff; stroke-width: 1.500; }
.m-mid { stroke: #fff; stroke-width: 3.200; }
.m-thick { stroke: #fff; stroke-width: 5.500; }
.m-hw { stroke: #c6c6c6; stroke-width: 5; }
.m-hw-n { stroke-width: 2.500; stroke: #cfcfcf; }
.m-hwi { stroke: #dedede; stroke-width: 2; }
.m-lbl text { fill: #9e9e9e; font-family: Roboto, sans-serif; }
.l-13 { font-size: 13px; letter-spacing: .3px; }
.l-15 { font-size: 15px; font-weight: 500; }
.l-17 { font-size: 17px; text-anchor: middle; }
.l-19 { font-size: 20px; }
.l-20 { font-size: 20px; }
.l-20i { font-size: 20px; font-style: italic; text-anchor: middle; }
.m-shield rect { fill: #a4a4a4; }
.m-shield text { fill: #fff; font: 500 12px Roboto, sans-serif; text-anchor: middle; }
.m-one rect { fill: #ababab; stroke: #bbb; }
.m-one text { fill: #555; font: 11px Roboto, sans-serif; text-anchor: middle; }
.m-s circle { fill: #747474; stroke: #e9e9e9; }
.m-s text { fill: #fff; font: 700 11px "Liberation Serif", serif; text-anchor: middle; }
.m-dk { fill: #d2d2d2; }
.m-poi { fill: #8f8f8f; stroke: #e9e9e9; }
.m-poi-w { fill: #f1f1f1; }
.pin { fill: #ed5449; stroke: #c23a30; stroke-width: .6; }
.pin-dot { fill: #5a0c06; }
.ctl { fill: #fff; }
.ctl-s { stroke: #9a9a9a; stroke-width: .7; }
.ctl-shadow { fill: rgba(0,0,0,.35); }
.chev { fill: none; stroke: #8a8a8a; stroke-width: 2; }
.ctl-blue { fill: #4a8cf7; }
.ctl-rail { fill: #fff; stroke: #888; stroke-width: .8; }
.peg { fill: #e8a013; stroke: #8a5a00; stroke-width: .5; }

/* get in touch */
.touch { display: grid; height: 719px; background: #2a2f33; color: #fff; overflow: hidden; }
.dots, .touch-in { grid-area: 1 / 1; }
.dots { display: block; }
.touch-in { padding-top: 88px; z-index: 1; }
.touch-title { margin: 0; text-align: center; font-size: 46px; line-height: 60px; font-weight: 700; letter-spacing: 1.100px; color: #fff; padding-right: 6px; }
.touch-rule { width: 164px; height: 15px; border-top: 2px solid #45c0a8; border-bottom: 2px solid #45c0a8; margin: 16px 0 0 713px; }
.touch-body { display: flex; justify-content: space-between; width: 1109px; margin: 81px 0 0 245px; font-family: Roboto, sans-serif; }
.touch-left { width: 540px; }
.brand { font-size: 74px; line-height: 76px; font-weight: 300; margin: -15px 0 0 -5px; color: #fff; letter-spacing: -1px; }
.brand span { color: #1dbd9b; }
.tagline { margin: 18px 0 0; font-size: 18.200px; line-height: 24px; font-weight: 400; color: #fff; }
.lorem { margin: 11px 0 0; font-size: 14px; letter-spacing: .02px; line-height: 24px; font-weight: 300; color: #fff; }
.addr { list-style: none; margin: 25px 0 0 -1px; padding: 0; font-size: 14.100px; font-weight: 300; line-height: 28px; }
.addr b { font-weight: 500; color: #45c0a8; }
.social { display: flex; gap: 9.500px; margin: 10px 0 0 1px; }
.soc { display: flex; align-items: center; justify-content: center; width: 30px; height: 30px; border: 1.500px solid #fff; }
.soc-on { background: #45c0a8; border-color: #45c0a8; }
.s-f { fill: #fff; }
.s-s { fill: none; stroke: #fff; stroke-width: 1.800; }
.tform { display: grid; grid-template-columns: 254px 254px; column-gap: 31px; row-gap: 30px; width: 539px; align-content: start; }
.ti { display: block; width: 100%; height: 50px; background: transparent; border: 1px solid #fff; border-radius: 0; color: #fff; font: 300 18px Roboto, sans-serif; outline: 0; }
.ti::placeholder { color: #fff; opacity: 1; }
.ti-name { padding: 2px 18px 0; }
.ti-a { padding: 0 18px 2px; }
.ti-b { padding: 0 15px; }
.ti-c { padding: 0 18px 2px; border-color: #1dbd9b; }
.ti-c::placeholder { color: #45c0a8; }
.tta { grid-column: 1 / 3; height: 119px; padding: 12px 17px; resize: none; }
.tsend { grid-column: 1; width: 151px; height: 51px; background: #45c0a8; color: #fff; border: 0; padding-bottom: 2px; font: 400 16px Roboto, sans-serif; }

/* footer */
.copy { height: 78px; background: #000; color: #fff; display: flex; align-items: center; padding: 0 0 2px 595px; font-size: 16px; font-weight: 400; }
.copy-2 { margin-left: 13px; }
.copy a { color: #3ab79e; }
```
